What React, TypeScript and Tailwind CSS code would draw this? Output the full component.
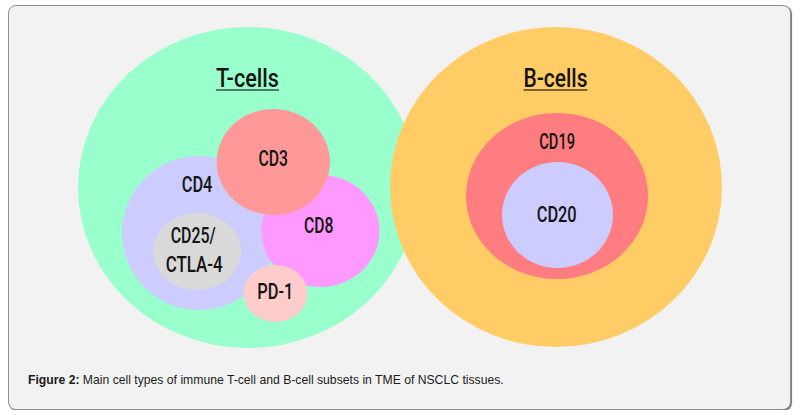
import React from "react";

type Lbl = { t: string; x: number; w: number; y: number; size: number };

const labels: Lbl[] = [
  { t: "CD3", x: 258.5, w: 29.4, y: 166, size: 22.5 },
  { t: "CD4", x: 181.7, w: 30.7, y: 191.7, size: 22.5 },
  { t: "CD8", x: 304, w: 29.4, y: 233.3, size: 22.5 },
  { t: "CD25/", x: 170.7, w: 45, y: 243.3, size: 22.5 },
  { t: "CTLA-4", x: 165.7, w: 57, y: 271.7, size: 22.5 },
  { t: "PD-1", x: 257.3, w: 36, y: 299.3, size: 22.5 },
  { t: "CD19", x: 539.3, w: 35.7, y: 149, size: 22.5 },
  { t: "CD20", x: 536.7, w: 40, y: 222.3, size: 22.5 },
];

const titles: Lbl[] = [
  { t: "T-cells", x: 216, w: 63, y: 87, size: 26 },
  { t: "B-cells", x: 523.5, w: 64, y: 87.3, size: 26 },
];

export default function App() {
  return (
    <div className="ml-2 mt-[5px] w-[783px] h-[405px] border border-[#8f8f8f] rounded-[8px] bg-[#f2f2f2] shadow-[1px_1px_1px_rgba(0,0,0,0.55)]">
      <svg
        width={781}
        height={350}
        viewBox="9 6 781 350"
        className="block"
        style={{ fontFamily: "Roboto, 'Liberation Sans', sans-serif" }}
      >
        {/* T-cells */}
        <ellipse cx={248} cy={187.5} rx={170} ry={160.5} fill="#99ffcc" />
        <circle cx={199} cy={233} r={77} fill="#ccccff" />
        <ellipse cx={320.5} cy={231} rx={59} ry={56} fill="#ff99ff" />
        <ellipse cx={273.3} cy={162} rx={56.7} ry={53} fill="#ff9999" />
        <ellipse cx={197} cy={251.5} rx={44} ry={38.5} fill="#d9d9d9" />
        <ellipse cx={275.5} cy={293.5} rx={32} ry={28.5} fill="#ffcccc" />
        {/* B-cells */}
        <ellipse cx={556} cy={187} rx={166} ry={160} fill="#ffcc66" />
        <ellipse cx={557} cy={196} rx={91} ry={83} fill="#ff7c80" />
        <ellipse cx={557.5} cy={215} rx={55.5} ry={53} fill="#ccccff" />

        {titles.map((l) => (
          <g key={l.t}>
            <text
              x={l.x}
              y={l.y}
              fontSize={l.size}
              fontWeight={500}
              fill="#141414"
              textLength={l.w}
              lengthAdjust="spacingAndGlyphs"
            >
              {l.t}
            </text>
            <line
              x1={l.x}
              x2={l.x + l.w}
              y1={90}
              y2={90}
              stroke="#222"
              strokeOpacity={0.6}
              strokeWidth={1.8}
            />
          </g>
        ))}
        {labels.map((l) => (
          <text
            key={l.t}
            x={l.x}
            y={l.y}
            fontSize={l.size}
            fontWeight={500}
            fill="#141414"
            textLength={l.w}
            lengthAdjust="spacingAndGlyphs"
          >
            {l.t}
          </text>
        ))}
      </svg>
      <p className="mt-[15px] pl-[19px] text-[12.2px] leading-[18px] text-[#1c1c1c] font-['Liberation_Sans',Arial,sans-serif]">
        <span className="font-bold">Figure 2:</span> Main cell types of immune T-cell and B-cell subsets in TME of NSCLC tissues.
      </p>
    </div>
  );
}
